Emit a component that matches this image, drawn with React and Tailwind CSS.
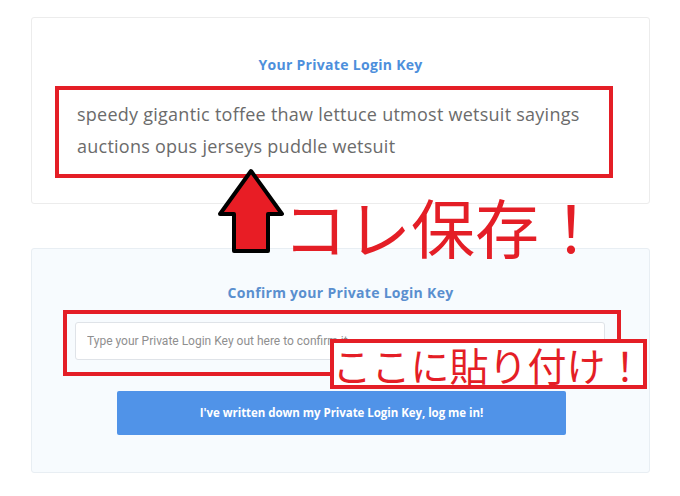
const KEY_PHRASE =
  "speedy gigantic toffee thaw lettuce utmost wetsuit sayings auctions opus jerseys puddle wetsuit";

const UpArrow = () => (
  <svg width="68" height="86" viewBox="0 0 68 86" className="block">
    <path
      d="M33 3 L64 46 L50 46 L50 83 L16 83 L16 46 L2 46 Z"
      fill="#e81d25"
      stroke="#000"
      strokeWidth="4"
      strokeLinejoin="round"
    />
  </svg>
);

const App = () => {
  return (
    <div className="relative w-[680px] h-[496px] bg-white overflow-hidden font-['Open_Sans',sans-serif]">
      {/* saved key card */}
      <div className="ml-[31px] mt-[17px] w-[619px] h-[187px] bg-white border border-[#ececec] rounded-[3px] pt-[37px]">
        <h2 className="text-center text-[14px] font-bold text-[#4d8fdc] leading-[20px] tracking-[0.3px]">
          Your Private Login Key
        </h2>
        <div className="ml-[23px] mt-[11px] w-[558px] h-[92px] border-[4px] border-[#e41e26] pl-[18px] pr-[10px] pt-[8px]">
          <p className="text-[18px] leading-[32px] text-[#6b6b6b] tracking-[0.25px]">
            {KEY_PHRASE}
          </p>
        </div>
      </div>

      {/* confirm card */}
      <div className="ml-[31px] mt-[44px] w-[619px] h-[225px] bg-[#f7fbfe] border border-[#e8eef3] rounded-[3px] pt-[34px]">
        <h2 className="text-center text-[14px] font-bold text-[#5a8fcf] leading-[20px] tracking-[0.3px]">
          Confirm your Private Login Key
        </h2>
        <div className="ml-[31px] mt-[7px] w-[558px] h-[66px] border-[4px] border-[#e41e26] pt-[8px] pl-[8px]">
          <input
            type="text"
            placeholder="Type your Private Login Key out here to confirm it"
            className="w-[530px] h-[38px] bg-white border border-[#dfe3e8] rounded-[3px] px-[11px] text-[12px] font-['Roboto',sans-serif] placeholder:text-[#8f8f8f] outline-none"
          />
        </div>
        <div className="flex mt-[15px] ml-[85px]">
          <button className="w-[449px] h-[44px] bg-[#5093e8] rounded-[2px] text-white text-[11.5px] font-bold tracking-[-0.05px]">
            I've written down my Private Login Key, log me in!
          </button>
        </div>
      </div>

      {/* annotations */}
      <div className="absolute left-[218px] top-[168px]">
        <UpArrow />
      </div>
      <div className="absolute left-[283px] top-[185px] text-[#e41e26] text-[64px] leading-[80px] font-['Noto_Sans_CJK_JP',sans-serif] whitespace-nowrap">
        コレ保存！
      </div>
      <div className="absolute left-[330px] top-[339px] w-[317px] h-[50px] bg-white border-[4px] border-[#e41e26] flex items-center justify-center text-[#e41e26] text-[39px] leading-none font-['Noto_Sans_CJK_JP',sans-serif] whitespace-nowrap">
        ここに貼り付け！
      </div>
    </div>
  );
};

export default App;
